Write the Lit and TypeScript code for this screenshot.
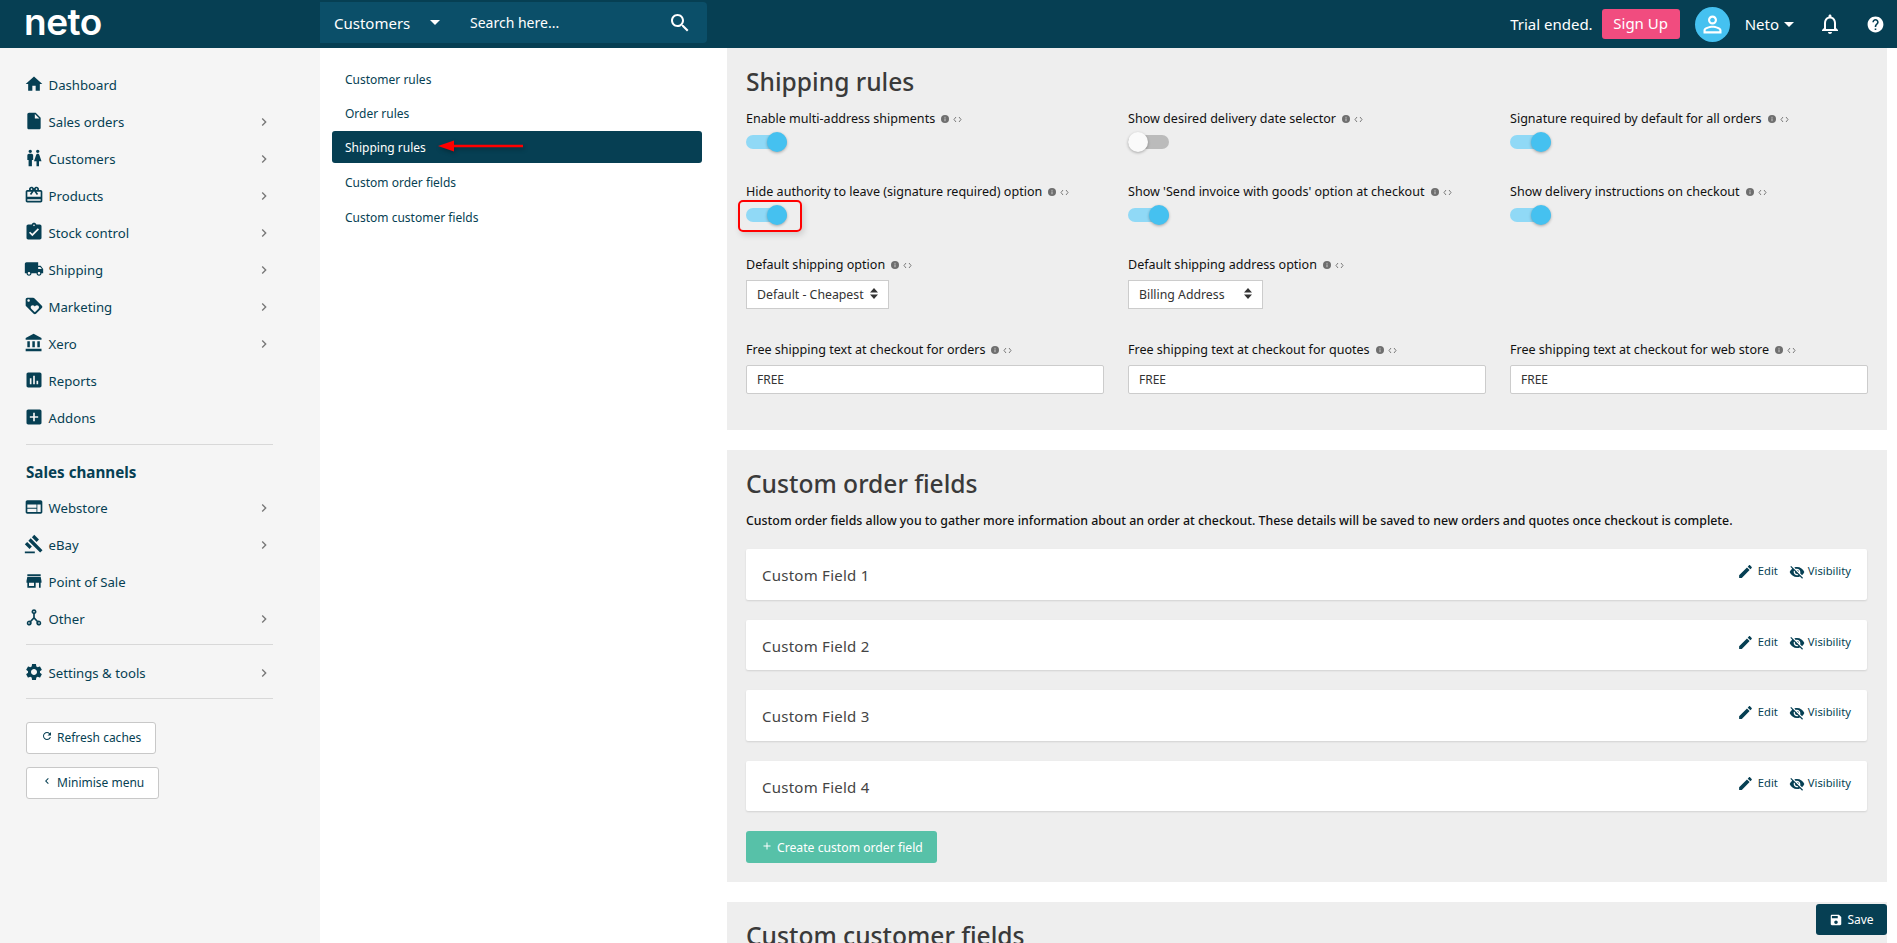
import { LitElement, html, css } from 'lit';
import { customElement } from 'lit/decorators.js';

const I: Record<string, string> = {
  home: 'M10 20v-6h4v6h5v-8h3L12 3 2 12h3v8z',
  file: 'M6 2c-1.1 0-2 .9-2 2v16c0 1.1.9 2 2 2h12c1.1 0 2-.9 2-2V8l-6-6H6zm7 7V3.5L18.5 9H13z',
  wc: 'M5.5 22v-7.5H4V9c0-1.1.9-2 2-2h3c1.1 0 2 .9 2 2v5.5H9.5V22h-4zM18 22v-6h3l-2.54-7.63C18.18 7.55 17.42 7 16.56 7h-.12c-.86 0-1.63.55-1.9 1.37L12 16h3v6h3zM7.5 6c1.11 0 2-.89 2-2s-.89-2-2-2-2 .89-2 2 .89 2 2 2zm9 0c1.11 0 2-.89 2-2s-.89-2-2-2-2 .89-2 2 .89 2 2 2z',
  gift: 'M20 6h-2.18c.11-.31.18-.65.18-1 0-1.66-1.34-3-3-3-1.05 0-1.96.54-2.5 1.35l-.5.67-.5-.68C10.96 2.54 10.05 2 9 2 7.34 2 6 3.34 6 5c0 .35.07.69.18 1H4c-1.11 0-1.99.89-1.99 2L2 19c0 1.11.89 2 2 2h16c1.11 0 2-.89 2-2V8c0-1.11-.89-2-2-2zm-5-2c.55 0 1 .45 1 1s-.45 1-1 1-1-.45-1-1 .45-1 1-1zM9 4c.55 0 1 .45 1 1s-.45 1-1 1-1-.45-1-1 .45-1 1-1zm11 15H4v-2h16v2zm0-5H4V8h5.08L7 10.83 8.62 12 11 8.76l1-1.36 1 1.36L15.38 12 17 10.83 14.92 8H20v6z',
  stock: 'M19 3h-4.18C14.4 1.84 13.3 1 12 1c-1.3 0-2.4.84-2.82 2H5c-1.1 0-2 .9-2 2v14c0 1.1.9 2 2 2h14c1.1 0 2-.9 2-2V5c0-1.1-.9-2-2-2zm-7 0c.55 0 1 .45 1 1s-.45 1-1 1-1-.45-1-1 .45-1 1-1zm-2 14l-4-4 1.41-1.41L10 14.17l6.59-6.59L18 9l-8 8z',
  truck: 'M20 8h-3V4H3c-1.1 0-2 .9-2 2v11h2c0 1.66 1.34 3 3 3s3-1.34 3-3h6c0 1.66 1.34 3 3 3s3-1.34 3-3h2v-5l-3-4zM6 18.5c-.83 0-1.5-.67-1.5-1.5s.67-1.5 1.5-1.5 1.5.67 1.5 1.5-.67 1.5-1.5 1.5zm13.5-9l1.96 2.5H17V9.5h2.5zm-1.5 9c-.83 0-1.5-.67-1.5-1.5s.67-1.5 1.5-1.5 1.5.67 1.5 1.5-.67 1.5-1.5 1.5z',
  tag: 'M21.41 11.58l-9-9C12.05 2.22 11.55 2 11 2H4c-1.1 0-2 .9-2 2v7c0 .55.22 1.05.59 1.42l9 9c.36.36.86.58 1.41.58.55 0 1.05-.22 1.41-.59l7-7c.37-.36.59-.86.59-1.41 0-.55-.23-1.06-.59-1.42zM5.5 7C4.67 7 4 6.33 4 5.5S4.67 4 5.5 4 7 4.67 7 5.5 6.33 7 5.5 7zm11.77 8.27L13 19.54l-4.27-4.27C8.28 14.81 8 14.19 8 13.5c0-1.38 1.12-2.5 2.5-2.5.69 0 1.32.28 1.77.74l.73.72.73-.73c.45-.45 1.08-.73 1.77-.73 1.38 0 2.5 1.12 2.5 2.5 0 .69-.28 1.32-.73 1.77z',
  bank: 'M4 10v7h3v-7H4zm6 0v7h3v-7h-3zM2 22h19v-3H2v3zm14-12v7h3v-7h-3zm-4.5-9L2 6v2h19V6l-9.5-5z',
  chart: 'M19 3H5c-1.1 0-2 .9-2 2v14c0 1.1.9 2 2 2h14c1.1 0 2-.9 2-2V5c0-1.1-.9-2-2-2zM9 17H7v-7h2v7zm4 0h-2V7h2v10zm4 0h-2v-4h2v4z',
  add: 'M19 3H5c-1.11 0-2 .9-2 2v14c0 1.1.89 2 2 2h14c1.1 0 2-.9 2-2V5c0-1.1-.9-2-2-2zm-2 10h-4v4h-2v-4H7v-2h4V7h2v4h4v2z',
  web: 'M20 4H4c-1.1 0-1.99.9-1.99 2L2 18c0 1.1.9 2 2 2h16c1.1 0 2-.9 2-2V6c0-1.1-.9-2-2-2zm-5 14H4v-4h11v4zm0-5H4V9h11v4zm5 5h-4V9h4v9z',
  gavel: 'M1 21h12v2H1zM5.245 8.07l2.83-2.827 14.14 14.142-2.828 2.828zM12.317 1l5.657 5.656-2.83 2.83-5.654-5.66zM3.825 9.485l5.657 5.657-2.828 2.828-5.657-5.657z',
  store: 'M20 4H4v2h16V4zm1 10v-2l-1-5H4l-1 5v2h1v6h10v-6h4v6h2v-6h1zm-9 4H6v-4h6v4z',
  hub: 'M12 1.5a3 3 0 0 0-1 5.83v4.1l-3.6 3.9a3 3 0 1 0 1.5 1.3L12 13.3l3.1 3.33a3 3 0 1 0 1.5-1.3L13 11.43v-4.1a3 3 0 0 0-1-5.83zm0 2a1 1 0 1 1 0 2 1 1 0 0 1 0-2zM6 17a1 1 0 1 1 0 2 1 1 0 0 1 0-2zm12 0a1 1 0 1 1 0 2 1 1 0 0 1 0-2z',
  gear: 'M19.14 12.94c.04-.3.06-.61.06-.94 0-.32-.02-.64-.07-.94l2.03-1.58c.18-.14.23-.41.12-.61l-1.92-3.32c-.12-.22-.37-.29-.59-.22l-2.39.96c-.5-.38-1.03-.7-1.62-.94l-.36-2.54c-.04-.24-.24-.41-.48-.41h-3.84c-.24 0-.43.17-.47.41l-.36 2.54c-.59.24-1.13.57-1.62.94l-2.39-.96c-.22-.08-.47 0-.59.22L2.74 8.87c-.12.21-.08.47.12.61l2.03 1.58c-.05.3-.09.63-.09.94s.02.64.07.94l-2.03 1.58c-.18.14-.23.41-.12.61l1.92 3.32c.12.22.37.29.59.22l2.39-.96c.5.38 1.03.7 1.62.94l.36 2.54c.05.24.24.41.48.41h3.84c.24 0 .44-.17.47-.41l.36-2.54c.59-.24 1.13-.56 1.62-.94l2.39.96c.22.08.47 0 .59-.22l1.92-3.32c.12-.22.07-.47-.12-.61l-2.01-1.58zM12 15.6c-1.98 0-3.6-1.62-3.6-3.6s1.62-3.6 3.6-3.6 3.6 1.62 3.6 3.6-1.62 3.6-3.6 3.6z',
  edit: 'M3 17.25V21h3.75L17.81 9.94l-3.75-3.75L3 17.25zM20.71 7.04c.39-.39.39-1.02 0-1.41l-2.34-2.34c-.39-.39-1.02-.39-1.41 0l-1.83 1.83 3.75 3.75 1.83-1.83z',
  eyeOff: 'M12 7c2.76 0 5 2.24 5 5 0 .65-.13 1.26-.36 1.83l2.92 2.92c1.51-1.26 2.7-2.89 3.43-4.75-1.73-4.39-6-7.5-11-7.5-1.4 0-2.74.25-3.98.7l2.16 2.16C10.74 7.13 11.35 7 12 7zM2 4.27l2.28 2.28.46.46C3.08 8.3 1.78 10.02 1 12c1.73 4.39 6 7.5 11 7.5 1.55 0 3.03-.3 4.38-.84l.42.42L19.73 22 21 20.73 3.27 3 2 4.27zM7.53 9.8l1.55 1.55c-.05.21-.08.43-.08.65 0 1.66 1.34 3 3 3 .22 0 .44-.03.65-.08l1.55 1.55c-.67.33-1.41.53-2.2.53-2.76 0-5-2.24-5-5 0-.79.2-1.53.53-2.2zm4.31-.78l3.15 3.15.02-.16c0-1.66-1.34-3-3-3l-.17.01z',
  save: 'M17 3H5c-1.11 0-2 .9-2 2v14c0 1.1.89 2 2 2h14c1.1 0 2-.9 2-2V7l-4-4zm-5 16c-1.66 0-3-1.34-3-3s1.34-3 3-3 3 1.34 3 3-1.34 3-3 3zm3-10H5V5h10v4z',
  search: 'M15.5 14h-.79l-.28-.27C15.41 12.59 16 11.11 16 9.5 16 5.91 13.09 3 9.5 3S3 5.91 3 9.5 5.91 16 9.5 16c1.61 0 3.09-.59 4.23-1.57l.27.28v.79l5 4.99L20.49 19l-4.99-5zm-6 0C7.01 14 5 11.99 5 9.5S7.01 5 9.5 5 14 7.01 14 9.5 11.99 14 9.5 14z',
  bell: 'M12 22c1.1 0 2-.9 2-2h-4c0 1.1.9 2 2 2zm6-6v-5c0-3.07-1.63-5.64-4.5-6.32V4c0-.83-.67-1.5-1.5-1.5s-1.5.67-1.5 1.5v.68C7.64 5.36 6 7.92 6 11v5l-2 2v1h16v-1l-2-2zm-2 1H8v-6c0-2.48 1.51-4.5 4-4.5s4 2.02 4 4.5v6z',
  help: 'M12 2C6.48 2 2 6.48 2 12s4.48 10 10 10 10-4.48 10-10S17.52 2 12 2zm1 17h-2v-2h2v2zm2.07-7.75l-.9.92C13.45 12.9 13 13.5 13 15h-2v-.5c0-1.1.45-2.1 1.17-2.83l1.24-1.26c.37-.36.59-.86.59-1.41 0-1.1-.9-2-2-2s-2 .9-2 2H8c0-2.21 1.79-4 4-4s4 1.79 4 4c0 .88-.36 1.68-.93 2.25z',
  person: 'M12 5.9c1.16 0 2.1.94 2.1 2.1s-.94 2.1-2.1 2.1S9.9 9.16 9.9 8s.94-2.1 2.1-2.1m0 9c2.97 0 6.1 1.46 6.1 2.1v1.1H5.9V17c0-.64 3.13-2.1 6.1-2.1M12 4C9.79 4 8 5.79 8 8s1.79 4 4 4 4-1.79 4-4-1.79-4-4-4zm0 9c-2.67 0-8 1.34-8 4v3h16v-3c0-2.66-5.33-4-8-4z',
  refresh: 'M17.65 6.35C16.2 4.9 14.21 4 12 4c-4.42 0-7.99 3.58-7.99 8s3.57 8 7.99 8c3.73 0 6.84-2.55 7.73-6h-2.08c-.82 2.33-3.04 4-5.65 4-3.31 0-6-2.69-6-6s2.69-6 6-6c1.66 0 3.14.69 4.22 1.78L13 11h7V4l-2.35 2.35z',
  left: 'M15.41 7.41L14 6l-6 6 6 6 1.41-1.41L10.83 12z',
  right: 'M8.59 16.59L10 18l6-6-6-6-1.41 1.41L13.17 12z',
  plus: 'M19 13h-6v6h-2v-6H5v-2h6V5h2v6h6v2z',
};

const icon = (name: string, cls = '') => html`<svg class="ico ${cls}" viewBox="0 0 24 24"><path d=${I[name]}></path></svg>`;

const mainNav = [
  ['home', 'Dashboard', false], ['file', 'Sales orders', true], ['wc', 'Customers', true],
  ['gift', 'Products', true], ['stock', 'Stock control', true], ['truck', 'Shipping', true],
  ['tag', 'Marketing', true], ['bank', 'Xero', true], ['chart', 'Reports', false], ['add', 'Addons', false],
] as [string, string, boolean][];

const channelNav = [
  ['web', 'Webstore', true], ['gavel', 'eBay', true], ['store', 'Point of Sale', false], ['hub', 'Other', true],
] as [string, string, boolean][];

const subNav = ['Customer rules', 'Order rules', 'Shipping rules', 'Custom order fields', 'Custom customer fields'];

@customElement('app-root')
export class AppRoot extends LitElement {
  navItem(item: [string, string, boolean]) {
    return html`<div class="nav-item">
      <span class="nav-ico">${icon(item[0])}</span><span class="nav-text">${item[1]}</span>
      ${item[2] ? icon('right', 'chev') : ''}
    </div>`;
  }

  label(text: string) {
    return html`<div class="label">
      <span>${text}</span>
      <svg class="info" viewBox="0 0 8 8"><circle cx="4" cy="4" r="4" fill="#6e6e6e"></circle><rect x="3.4" y="3.4" width="1.2" height="2.8" fill="#bbb"></rect><rect x="3.4" y="1.8" width="1.2" height="1" fill="#bbb"></rect></svg>
      <svg class="code" viewBox="0 0 9 7"><path d="M3 1 1 3.5 3 6M6 1l2 2.5L6 6" fill="none" stroke="#6e6e6e" stroke-width=".9"></path></svg>
    </div>`;
  }

  toggleField(text: string, on: boolean) {
    return html`<div class="field">
      ${this.label(text)}
      <div class="toggle ${on ? 'on' : ''}"><span class="knob"></span></div>
    </div>`;
  }

  selectField(text: string, value: string, width: number) {
    return html`<div class="field">
      ${this.label(text)}
      <div class="select" style="width:${width}px"><span>${value}</span>
        <svg class="updown" viewBox="0 0 8 11"><path d="M4 0 8 4.4H0zM4 11 0 6.6h8z" fill="#333"></path></svg>
      </div>
    </div>`;
  }

  inputField(text: string) {
    return html`<div class="field">
      ${this.label(text)}
      <div class="input">FREE</div>
    </div>`;
  }

  card(n: number) {
    return html`<div class="card">
      <span class="card-title">Custom Field ${n}</span>
      <div class="card-actions">
        <span class="action">${icon('edit')}Edit</span>
        <span class="action">${icon('eyeOff')}Visibility</span>
      </div>
    </div>`;
  }

  render() {
    return html`
      <header class="topbar">
        <div class="logo-wrap"><span class="logo">neto</span></div>
        <div class="search">
          <span class="scope">Customers</span><span class="caret"></span>
          <span class="placeholder">Search here...</span>
          ${icon('search', 'search-ico')}
        </div>
        <div class="top-right">
          <span class="trial">Trial ended.</span>
          <span class="signup">Sign Up</span>
          <span class="avatar">${icon('person')}</span>
          <span class="user">Neto</span><span class="caret small"></span>
          ${icon('bell', 'bell')}
          ${icon('help', 'help')}
        </div>
      </header>
      <div class="body">
        <aside class="sidebar">
          ${mainNav.map((n) => this.navItem(n))}
          <hr />
          <div class="group-title">Sales channels</div>
          ${channelNav.map((n) => this.navItem(n))}
          <hr />
          ${this.navItem(['gear', 'Settings & tools', true])}
          <hr />
          <div class="side-btn first">${icon('refresh')}Refresh caches</div>
          <div class="side-btn">${icon('left')}Minimise menu</div>
        </aside>
        <nav class="subnav">
          ${subNav.map((s) => html`<div class="sub-item ${s === 'Shipping rules' ? 'active' : ''}">${s}</div>`)}
        </nav>
        <main class="main">
          <section class="panel first">
            <h2>Shipping rules</h2>
            <div class="grid">
              ${this.toggleField('Enable multi-address shipments', true)}
              ${this.toggleField('Show desired delivery date selector', false)}
              ${this.toggleField('Signature required by default for all orders', true)}
              ${this.toggleField('Hide authority to leave (signature required) option', true)}
              ${this.toggleField("Show 'Send invoice with goods' option at checkout", true)}
              ${this.toggleField('Show delivery instructions on checkout', true)}
              ${this.selectField('Default shipping option', 'Default - Cheapest', 143)}
              ${this.selectField('Default shipping address option', 'Billing Address', 135)}
              <div></div>
              ${this.inputField('Free shipping text at checkout for orders')}
              ${this.inputField('Free shipping text at checkout for quotes')}
              ${this.inputField('Free shipping text at checkout for web store')}
            </div>
          </section>
          <section class="panel">
            <h2>Custom order fields</h2>
            <p class="desc">Custom order fields allow you to gather more information about an order at checkout. These details will be saved to new orders and quotes once checkout is complete.</p>
            <div class="cards">${[1, 2, 3, 4].map((n) => this.card(n))}</div>
            <div class="create">${icon('plus')}Create custom order field</div>
          </section>
          <section class="panel">
            <h2>Custom customer fields</h2>
          </section>
        </main>
      </div>
      <div class="save">${icon('save')}Save</div>
      <div class="mark"></div>
      <svg class="arrow" width="96" height="20" viewBox="0 0 96 20">
        <path d="M87 6.8H18V2.5L2 8 18 13.5V9.2h69z" fill="#f00"></path>
      </svg>
    `;
  }

  static styles = css`
    :host {
      display: flex;
      flex-direction: column;
      position: relative;
      height: 943px;
      overflow: hidden;
      background: #fff;
      font-family: 'Noto Sans', 'Open Sans', sans-serif;
      font-size: 13px;
      color: #111;
    }
    .ico { display: block; fill: currentColor; flex: none; }

    .topbar {
      height: 48px;
      flex: none;
      display: flex;
      background: #063f53;
      color: #fff;
    }
    .logo-wrap { width: 320px; padding-left: 24px; box-sizing: border-box; }
    .logo {
      font-family: 'Inter', sans-serif;
      font-size: 37px;
      font-weight: 600;
      line-height: 43px;
      letter-spacing: -0.5px;
    }
    .search {
      width: 387px;
      height: 41px;
      margin-top: 2px;
      display: flex;
      align-items: center;
      background: #0b4f69;
      border-radius: 0 4px 4px 0;
      font-size: 15px;
      padding-left: 14px;
      box-sizing: border-box;
    }
    .scope { width: 76px; }
    .caret {
      width: 0;
      height: 0;
      margin-left: 20px;
      border-left: 5px solid transparent;
      border-right: 5px solid transparent;
      border-top: 5px solid #fff;
    }
    .caret.small { margin-left: 5px; }
    .placeholder { margin-left: 30px; font-size: 14px; flex: 1; }
    .search-ico { width: 24px; height: 24px; margin-right: 15px; }
    .top-right {
      flex: 1;
      display: flex;
      align-items: center;
      justify-content: flex-end;
      padding-right: 12px;
      font-size: 15px;
    }
    .signup {
      margin-left: 9px;
      width: 78px;
      height: 30px;
      line-height: 29px;
      text-align: center;
      background: #f14c7f;
      border-radius: 3px;
    }
    .avatar {
      width: 35px;
      height: 35px;
      margin-left: 15px;
      border-radius: 50%;
      background: #45c1f0;
      display: flex;
      align-items: center;
      justify-content: center;
    }
    .avatar .ico { width: 27px; height: 27px; }
    .user { margin-left: 15px; }
    .top-right .bell { width: 24px; height: 24px; margin-left: 24px; margin-right: 1px; }
    .top-right .help { width: 19px; height: 19px; margin-left: 23px; }

    .body { flex: 1; display: flex; min-height: 0; }
    .sidebar {
      width: 320px;
      flex: none;
      box-sizing: border-box;
      padding: 18.5px 48px 0 24px;
      background: #f5f5f5;
      color: #063f53;
      font-size: 13.2px;
    }
    .nav-item { height: 37px; display: flex; align-items: center; }
    .nav-ico { width: 24.5px; flex: none; }
    .nav-ico .ico { width: 20px; height: 20px; margin-top: -2px; }
    .nav-text { flex: 1; }
    .chev { width: 16px; height: 16px; color: #777; margin-right: 0; }
    hr {
      border: 0;
      border-top: 1px solid #d8d8d8;
      margin: 7px -1px 9px 2px;
    }
    .group-title {
      font-size: 15.2px;
      font-weight: 700;
      padding-left: 2px;
      line-height: 20px;
      margin: 17px 0 7.5px;
    }
    .side-btn {
      display: flex;
      width: fit-content;
      align-items: center;
      height: 32px;
      box-sizing: border-box;
      margin: 13px 0 0 2px;
      padding: 0 14px 0 14px;
      background: #fff;
      border: 1px solid #c8c8c8;
      border-radius: 3px;
      font-size: 12px;
      color: #063f53;
    }
    .side-btn.first { margin-top: 22.5px; }
    .side-btn .ico { width: 12px; height: 12px; margin-right: 4px; margin-top: -4px; }

    .subnav {
      width: 407px;
      flex: none;
      box-sizing: border-box;
      padding: 13.7px 25px 0 12px;
      color: #063f53;
      font-size: 12px;
    }
    .sub-item {
      height: 34.5px;
      line-height: 35px;
      padding-left: 13px;
      border-radius: 3px;
    }
    .sub-item.active {
      background: #063f53;
      color: #fff;
      height: 32px;
      line-height: 33px;
      margin: 0 0 2.5px;
    }

    .main { flex: 1; padding-right: 10px; min-width: 0; }
    .panel {
      background: #eee;
      padding: 18px 20px 19px 19px;
      margin-bottom: 20px;
    }
    .panel.first { padding-bottom: 5px; }
    h2 {
      margin: 0 0 12px;
      font-size: 24.6px;
      line-height: 32px;
      font-weight: 500;
      color: #3a3a3a;
    }
    .grid {
      display: grid;
      grid-template-columns: repeat(3, 358px);
      column-gap: 24px;
    }
    .field { margin-bottom: 31px; }
    .label {
      display: flex;
      align-items: center;
      height: 18px;
      line-height: 18px;
      font-size: 12.55px;
      color: #111;
    }
    .info { width: 8px; height: 8px; margin-left: 6px; }
    .code { width: 9px; height: 7px; margin-left: 4px; }
    .toggle {
      position: relative;
      width: 41px;
      height: 14px;
      margin-top: 7px;
      margin-bottom: 3px;
      border-radius: 7px;
      background: #bbb;
    }
    .toggle.on { background: #90d9f6; }
    .knob {
      position: absolute;
      top: -3px;
      left: 0;
      width: 20px;
      height: 20px;
      border-radius: 50%;
      background: #fafafa;
      box-shadow: 0 1px 3px rgba(0, 0, 0, 0.3);
    }
    .toggle.on .knob { left: 21px; background: #45c1f0; }
    .select {
      display: flex;
      align-items: center;
      justify-content: space-between;
      height: 29px;
      box-sizing: border-box;
      margin: 6px 0 1px;
      padding: 0 10px;
      line-height: 29px;
      background: #fff;
      border: 1px solid #ccc;
      font-size: 12.3px;
      color: #333;
    }
    .updown { width: 8px; height: 11px; margin-top: -2px; }
    .input {
      height: 29px;
      line-height: 28px;
      box-sizing: border-box;
      margin-top: 6px;
      padding: 0 10px;
      background: #fff;
      border: 1px solid #ccc;
      border-radius: 2px;
      font-size: 12px;
      color: #333;
    }
    .desc {
      margin: 0 0 19px;
      font-size: 12.36px;
      font-weight: 500;
      line-height: 18px;
      color: #111;
    }
    .cards { display: flex; flex-direction: column; gap: 20px; }
    .card {
      height: 50.5px;
      box-sizing: border-box;
      display: flex;
      justify-content: space-between;
      padding: 0 16px;
      background: #fff;
      border-radius: 2px;
      box-shadow: 0 1px 2px rgba(0, 0, 0, 0.12);
    }
    .card-title { font-size: 15px; line-height: 52px; color: #444; letter-spacing: 0.25px; }
    .card-actions { display: flex; gap: 11px; padding-top: 12px; color: #063f53; font-size: 11.2px; }
    .action { display: flex; align-items: flex-start; gap: 3px; line-height: 20px; }
    .action .ico { width: 16px; height: 16px; margin-top: 3px; }
    .action:first-child .ico { width: 17px; height: 17px; margin-top: 2px; margin-right: 1px; }
    .create {
      display: flex;
      align-items: center;
      width: 191px;
      height: 32px;
      box-sizing: border-box;
      margin-top: 20px;
      padding: 1px 0 0 15px;
      background: #57c1a8;
      border-radius: 3px;
      color: #fff;
      font-size: 12.2px;
    }
    .create .ico { width: 12px; height: 12px; margin-right: 4px; margin-top: -3px; }

    .save {
      position: absolute;
      left: 1816px;
      top: 904px;
      width: 71px;
      height: 31px;
      display: flex;
      align-items: center;
      justify-content: center;
      gap: 4px;
      background: #063f53;
      border-radius: 3px;
      color: #fff;
      font-size: 12px;
    }
    .save .ico { width: 14px; height: 14px; }
    .mark {
      position: absolute;
      left: 738px;
      top: 200px;
      width: 64px;
      height: 32px;
      box-sizing: border-box;
      border: 2px solid #f00;
      border-radius: 5px;
      box-shadow: 2px 3px 6px rgba(0, 0, 0, 0.15);
    }
    .arrow {
      position: absolute;
      left: 436px;
      top: 138px;
      filter: drop-shadow(1px 2px 2px rgba(0, 0, 0, 0.3));
    }
  `;
}
